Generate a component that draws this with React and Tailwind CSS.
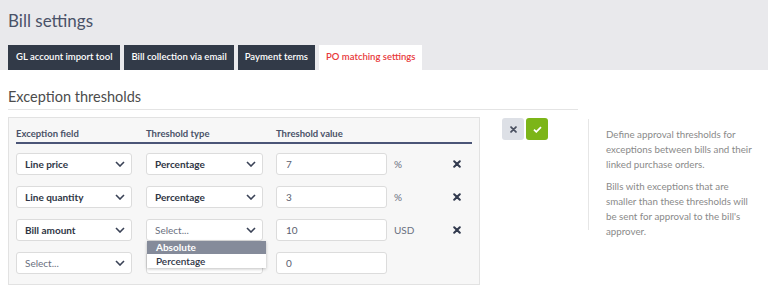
import React from "react";

const rows = [
  { field: "Line price", type: "Percentage", value: "7", unit: "%", remove: true },
  { field: "Line quantity", type: "Percentage", value: "3", unit: "%", remove: true },
  { field: "Bill amount", type: null, value: "10", unit: "USD", remove: true, open: true },
  { field: null, type: null, value: "0", unit: "", remove: false, hidden: true },
];

function Chevron() {
  return (
    <svg width="10" height="6" viewBox="0 0 10 6" className="shrink-0">
      <path d="M1 1l4 4 4-4" fill="none" stroke="#3a4256" strokeWidth="1.6" />
    </svg>
  );
}

function Select({ value, width = "w-[116px]", blank = false }) {
  return (
    <div className={`${width} h-[22px] flex items-center justify-between pl-[8px] pr-[6px] bg-white border border-[#dcdcdc] rounded-[3px] text-[10px]`}>
      {value ? (
        <span className="font-bold text-[#2f3645]">{value}</span>
      ) : (
        <span className="text-[#6a7080]">{blank ? "" : "Select..."}</span>
      )}
      <Chevron />
    </div>
  );
}

function Cross({ color = "#323a4e", size = 8 }) {
  return (
    <svg width={size} height={size} viewBox="0 0 8 8">
      <path d="M1.2 1.2l5.6 5.6M6.8 1.2L1.2 6.8" stroke={color} strokeWidth="2" strokeLinecap="round" />
    </svg>
  );
}

export default function App() {
  return (
    <div className="w-[768px] h-[293px] bg-white overflow-hidden" style={{ fontFamily: "Lato, 'Open Sans', sans-serif" }}>
      {/* header */}
      <div className="bg-[#e9e9ec] pt-[8px] px-[8px]">
        <h1 className="text-[17px] leading-[26px] text-[#4a5268]">Bill settings</h1>
        <div className="flex gap-[4px] mt-[11px]">
          <div className="h-[25px] px-[8px] flex items-center bg-[#323a48] text-white text-[9.5px] font-semibold">GL account import tool</div>
          <div className="h-[25px] px-[7px] flex items-center bg-[#323a48] text-white text-[9.5px] font-semibold">Bill collection via email</div>
          <div className="h-[25px] px-[7px] flex items-center bg-[#323a48] text-white text-[9.5px] font-semibold">Payment terms</div>
          <div className="h-[25px] px-[7px] flex items-center bg-white text-[#e8393b] text-[9.5px] font-semibold">PO matching settings</div>
        </div>
      </div>

      <div className="flex px-[8px]">
        <div className="w-[570px]">
          <h2 className="mt-[17px] text-[14.5px] leading-[20px] text-[#4c4c4c]">Exception thresholds</h2>
          <div className="mt-[2px] border-t border-[#e4e4e4]" />
          <div className="flex mt-[7px]">
            {/* table panel */}
            <div className="w-[472px] h-[168px] bg-[#f7f7f7] border border-[#e2e2e2] px-[7px] pt-[9px]">
              <div className="flex text-[9.5px] font-bold text-[#4a5268] h-[17px] items-center border-b-2 border-[#4b5577]">
                <div className="w-[130px]">Exception field</div>
                <div className="w-[130px]">Threshold type</div>
                <div>Threshold value</div>
              </div>
              <div className="flex flex-col gap-[11px] mt-[9px]">
                {rows.map((r, i) => (
                  <div key={i} className="flex items-center h-[22px]">
                    <div className="w-[130px]">
                      <Select value={r.field} />
                    </div>
                    <div className="w-[130px] relative">
                      <Select value={r.type} width="w-[117px]" blank={r.hidden} />
                      {r.open && (
                        <div className="absolute left-[1px] top-[22px] w-[119px] bg-white shadow-[0_1px_3px_rgba(0,0,0,0.25)] z-10 text-[10px]">
                          <div className="h-[13px] leading-[13px] px-[9px] bg-[#858b9a] text-white font-bold">Absolute</div>
                          <div className="h-[14px] leading-[14px] px-[9px] text-[#2f3645] font-semibold">Percentage</div>
                        </div>
                      )}
                    </div>
                    <div className="w-[111px] h-[22px] flex items-center pl-[9px] bg-white border border-[#dcdcdc] rounded-[3px] text-[10px] text-[#5a6070]">
                      {r.value}
                    </div>
                    <div className="w-[66px] pl-[7px] text-[10px] text-[#6a7080]">{r.unit}</div>
                    {r.remove && <Cross />}
                  </div>
                ))}
              </div>
            </div>
            {/* actions */}
            <div className="flex gap-[2px] ml-[22px] mt-[1px] h-[22px]">
              <button className="w-[22px] h-[22px] flex items-center justify-center bg-[#dde0e6] rounded-[3px]">
                <Cross color="#4a5060" size={7} />
              </button>
              <button className="w-[22px] h-[22px] flex items-center justify-center bg-[#7cb518] rounded-[3px]">
                <svg width="9" height="7" viewBox="0 0 9 7">
                  <path d="M1 3.6l2.3 2.2L8 1.2" fill="none" stroke="white" strokeWidth="1.8" />
                </svg>
              </button>
            </div>
          </div>
        </div>
        {/* side note */}
        <div className="ml-[10px] mt-[49px] h-[111px] border-l border-[#e6e6e6] pl-[17px] pt-[8px] w-[170px] text-[9.75px] leading-[15px] text-[#8a8a8a]">
          <p>Define approval thresholds for exceptions between bills and their linked purchase orders.</p>
          <p className="mt-[7px]">Bills with exceptions that are smaller than these thresholds will be sent for approval to the bill's approver.</p>
        </div>
      </div>
    </div>
  );
}
